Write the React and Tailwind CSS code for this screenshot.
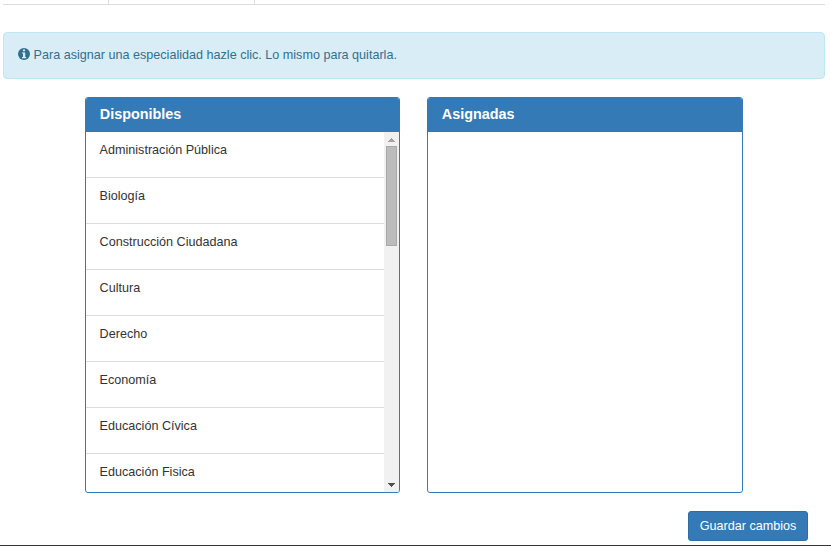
const available = [
  "Administración Pública",
  "Biología",
  "Construcción Ciudadana",
  "Cultura",
  "Derecho",
  "Economía",
  "Educación Cívica",
  "Educación Fisica",
];

function InfoIcon() {
  return (
    <svg className="mr-[3.6px] mb-0.5 h-3 w-3 shrink-0" viewBox="0 0 12 12" aria-hidden="true">
      <circle cx="6" cy="6" r="6" fill="#31708f" />
      <path d="M5 1.5h2V3.3H5zM4 4.5h3.2V9H8.2v1.2H4V9h1V5.6H4z" fill="#d9edf7" />
    </svg>
  );
}

function Scrollbar() {
  return (
    <div className="flex w-[15px] shrink-0 flex-col items-center bg-[#f1f1f1]">
      <svg className="h-3.5 w-[15px] shrink-0" viewBox="0 0 15 14" shapeRendering="crispEdges" aria-hidden="true">
        <path d="M7 6h1v1h1v1h1v1h1v1H4V9h1V8h1V7h1z" fill="#a3a3a3" />
      </svg>
      <div className="h-[100px] w-[11px] shrink-0 border border-[#a8a8a8] bg-[#bcbcbc]" />
      <svg className="mt-auto h-3.5 w-[15px] shrink-0" viewBox="0 0 15 14" shapeRendering="crispEdges" aria-hidden="true">
        <path d="M4 5h7v1h-1v1H9v1H8v1H7V8H6V7H5V6H4z" fill="#505050" />
      </svg>
    </div>
  );
}

function Panel({ title, className, children }) {
  return (
    <section className={`flex h-[396px] flex-col overflow-hidden rounded-[3px] border border-[#337ab7] ${className}`}>
      <h3 className="h-[34px] shrink-0 bg-[#337ab7] pl-[13.8px] text-[14.4px] leading-[32px] font-bold text-white">
        {title}
      </h3>
      <div className="flex min-h-0 flex-1">{children}</div>
    </section>
  );
}

export default function App() {
  return (
    <div className="flex h-[546px] w-[831px] flex-col overflow-hidden border-b border-[#333] bg-white font-['Liberation_Sans',Arial,sans-serif] text-[12.6px] text-[#333]">
      <div className="mr-1.5 ml-[3px] flex h-[5px] shrink-0 border-b border-[#ddd]">
        <div className="h-[4px] w-[106px] border-r border-[#ddd]" />
        <div className="h-[4px] w-[146px] border-r border-[#ddd]" />
      </div>
      <div className="mt-[27px] mr-1.5 ml-[3px] flex h-[47px] shrink-0 items-center rounded-[4px] border border-[#bce8f1] bg-[#d9edf7] pb-0.5 pl-3.5 text-[#31708f]">
        <InfoIcon />
        <span className="h-[43px] leading-[44px]">Para asignar una especialidad hazle clic. Lo mismo para quitarla.</span>
      </div>
      <div className="mt-[18px] ml-[85px] flex gap-[27px]">
        <Panel title="Disponibles" className="w-[315px]">
          <ul className="min-w-0 flex-1 overflow-hidden">
            {available.map((name) => (
              <li key={name} className="h-[46px] border-b border-[#ddd] pl-[13.6px] leading-[36px]">
                {name}
              </li>
            ))}
          </ul>
          <Scrollbar />
        </Panel>
        <Panel title="Asignadas" className="w-[316px]" />
      </div>
      <div className="mt-[18px] mr-[23px] flex justify-end">
        <button className="h-[30px] w-[120px] rounded-[3px] border border-[#2e6da4] bg-[#337ab7] text-center text-[12.6px] leading-[28px] text-white">
          Guardar cambios
        </button>
      </div>
    </div>
  );
}
